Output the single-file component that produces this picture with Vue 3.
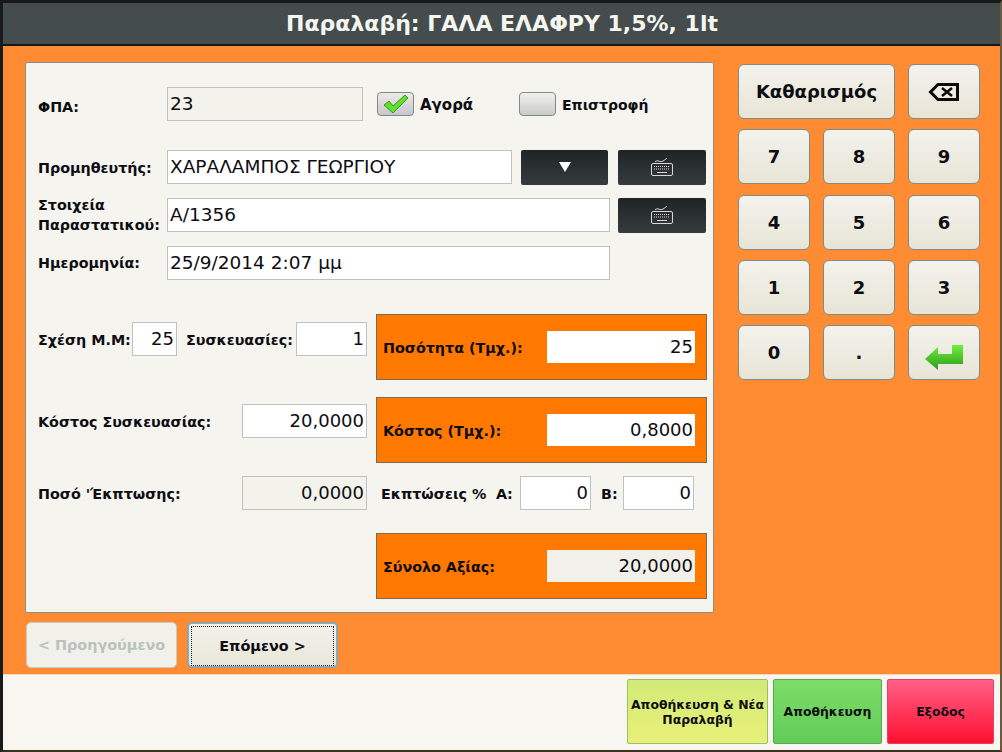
<script setup>
const digits = ["7", "8", "9", "4", "5", "6", "1", "2", "3", "0", "."];
</script>

<template>
  <div class="window">
    <header class="title">Παραλαβή: ΓΑΛΑ ΕΛΑΦΡΥ 1,5%, 1lt</header>

    <main class="body">
      <div class="left">
        <section class="card">
          <div class="row first">
            <label class="lbl vat">ΦΠΑ:</label>
            <div class="field off w196">23</div>
            <div class="check on">
              <svg width="32" height="24" viewBox="0 0 32 24">
                <path d="M4 13 L9 9 L13 14 L25 3 L28 6 L13 21 Z" fill="#5ee02c" stroke="#3c9a1e" stroke-width="1" />
              </svg>
            </div>
            <span class="check-text buy">Αγορά</span>
            <div class="check"></div>
            <span class="check-text">Επιστροφή</span>
          </div>

          <div class="row supplier">
            <label class="lbl">Προμηθευτής:</label>
            <div class="field w345">ΧΑΡΑΛΑΜΠΟΣ ΓΕΩΡΓΙΟΥ</div>
            <button class="dark drop">
              <svg width="14" height="12" viewBox="0 0 14 12"><path d="M1 1 H13 L7 11 Z" fill="#fff" /></svg>
            </button>
            <button class="dark kb">
              <svg width="24" height="20" viewBox="0 0 24 20" fill="none" stroke="#d5d8d4" stroke-width="1">
                <path d="M5 5 C8 2 10 6 13 4 S16 2 17 1" />
                <rect x="1.5" y="6.5" width="21" height="12" rx="1.5" />
                <path d="M4 9.5 H20 M4 12 H20" stroke-dasharray="1 1" />
                <path d="M7 15.5 H17" />
              </svg>
            </button>
          </div>

          <div class="row">
            <label class="lbl two">Στοιχεία Παραστατικού:</label>
            <div class="field w443">Α/1356</div>
            <button class="dark kb">
              <svg width="24" height="20" viewBox="0 0 24 20" fill="none" stroke="#d5d8d4" stroke-width="1">
                <path d="M5 5 C8 2 10 6 13 4 S16 2 17 1" />
                <rect x="1.5" y="6.5" width="21" height="12" rx="1.5" />
                <path d="M4 9.5 H20 M4 12 H20" stroke-dasharray="1 1" />
                <path d="M7 15.5 H17" />
              </svg>
            </button>
          </div>

          <div class="row">
            <label class="lbl date">Ημερομηνία:</label>
            <div class="field w443">25/9/2014 2:07 μμ</div>
          </div>

          <div class="lower">
            <div class="lower-row">
              <div class="side side-a">
                <label class="lbl relation">Σχέση Μ.Μ:</label>
                <div class="field num w45">25</div>
                <label class="lbl packs">Συσκευασίες:</label>
                <div class="field num w71">1</div>
              </div>
              <div class="box">
                <span>Ποσότητα (Τμχ.):</span>
                <div class="field num boxed">25</div>
              </div>
            </div>

            <div class="lower-row gap17">
              <div class="side side-b">
                <label class="lbl">Κόστος Συσκευασίας:</label>
                <div class="field num w125">20,0000</div>
              </div>
              <div class="box">
                <span>Κόστος (Τμχ.):</span>
                <div class="field num boxed">0,8000</div>
              </div>
            </div>

            <div class="lower-row discounts">
              <div class="side">
                <label class="lbl">Ποσό 'Έκπτωσης:</label>
                <div class="field num off w125">0,0000</div>
              </div>
              <div class="disc">
                <label class="lbl d-title">Εκπτώσεις %</label>
                <label class="lbl d-a">Α:</label>
                <div class="field num w71">0</div>
                <label class="lbl d-b">Β:</label>
                <div class="field num w71">0</div>
              </div>
            </div>

            <div class="lower-row">
              <div class="side"></div>
              <div class="box">
                <span>Σύνολο Αξίας:</span>
                <div class="field num boxed off">20,0000</div>
              </div>
            </div>
          </div>
        </section>

        <nav class="nav">
          <button class="nav-btn disabled">&lt; Προηγούμενο</button>
          <button class="nav-btn focused"><span>Επόμενο &gt;</span></button>
        </nav>
      </div>

      <div class="pad">
        <button class="key wide">Καθαρισμός</button>
        <button class="key">
          <svg width="32" height="20" viewBox="0 0 32 20" fill="none" stroke="#0c0c0c" stroke-width="3">
            <path d="M29.5 2.5 H10 L2.5 10 L10 17.5 H29.5 Z" />
            <path d="M14 6 L24 14 M24 6 L14 14" stroke-width="2.6" />
          </svg>
        </button>
        <button v-for="d in digits" :key="d" class="key">{{ d }}</button>
        <button class="key">
          <svg class="enter" width="40" height="28" viewBox="0 0 40 28">
            <defs>
              <linearGradient id="enterFill" x1="0" y1="0" x2="0" y2="1">
                <stop offset="0" stop-color="#6cf03c" />
                <stop offset="1" stop-color="#2f9a1c" />
              </linearGradient>
            </defs>
            <path d="M1 16 L14 4 V11 H28 V2 H39 V21 H14 V27 Z" fill="url(#enterFill)" />
          </svg>
        </button>
      </div>
    </main>

    <footer class="footer">
      <button class="act lime">Αποθήκευση &amp; Νέα Παραλαβή</button>
      <button class="act green">Αποθήκευση</button>
      <button class="act red">Εξοδος</button>
    </footer>
  </div>
</template>

<style scoped>
.window {
  width: 1002px;
  height: 752px;
  box-sizing: border-box;
  display: flex;
  flex-direction: column;
  border-left: 3px solid #17191a;
  border-right: 2px solid #6b5a3c;
  border-top: 3px solid #17191a;
  border-bottom: 2px solid #3a3020;
  font-family: "DejaVu Sans", sans-serif;
  color: #0d0d12;
}
.title {
  height: 43px;
  box-sizing: border-box;
  flex: none;
  background: #444c4d;
  border-bottom: 2px solid #14181a;
  color: #f6f6f0;
  font-size: 22px;
  font-weight: 700;
  line-height: 41px;
  text-align: center;
  padding-left: 1px;
}
.body {
  flex: 1;
  display: flex;
  background: #ff8c32;
  padding: 16px 0 0 22px;
}
.left {
  width: 689px;
  flex: none;
}
.card {
  height: 551px;
  box-sizing: border-box;
  background: #f5f4ef;
  border: 1px solid #8d8d84;
  border-radius: 2px;
  padding: 24px 0 0 12px;
}
.row {
  display: flex;
  align-items: center;
  height: 34px;
  margin-top: 14px;
  padding-right: 7px;
}
.row.first {
  margin-top: 0;
}
.row.supplier {
  margin-top: 29px;
}
.lbl {
  font-size: 14.3px;
  font-weight: 700;
  line-height: 22px;
  white-space: nowrap;
  padding-top: 2px;
}
.row > .lbl {
  width: 129px;
  flex: none;
}
.row > .lbl.vat {
  padding-top: 5px;
}
.row > .lbl.date {
  padding-top: 0;
}
.row > .lbl.two {
  white-space: normal;
  line-height: 20px;
  padding-top: 0;
}
.field {
  height: 34px;
  box-sizing: border-box;
  flex: none;
  background: #fff;
  border: 1px solid #bcc4bd;
  font-size: 18.5px;
  font-weight: 400;
  line-height: 32px;
  padding: 0 2px;
  white-space: nowrap;
  overflow: hidden;
}
.field.off {
  background: #f3f3ec;
}
.field.num {
  text-align: right;
  font-size: 18px;
  line-height: 31px;
}
.w196 { width: 196px; }
.w345 { width: 345px; }
.w443 { width: 443px; }
.w45 { width: 45px; }
.w71 { width: 71px; }
.w125 { width: 125px; }
.check {
  width: 37px;
  height: 24px;
  box-sizing: border-box;
  flex: none;
  margin-left: 14px;
  border: 1px solid #7f8a88;
  border-radius: 4px;
  background: linear-gradient(#f0f0ea, #c9ccc8);
  display: flex;
  align-items: center;
  justify-content: center;
}
.check.on {
  background: linear-gradient(#ecece4, #c8c4cf);
}
.check-text {
  font-size: 14px;
  font-weight: 700;
  margin-left: 6px;
  padding-top: 2px;
}
.check-text.buy {
  width: 87px;
  flex: none;
  font-size: 15px;
}
.check-text.buy + .check {
  margin-left: 12px;
}
.dark {
  height: 35px;
  width: 87px;
  flex: none;
  padding: 0;
  border: 0;
  border-radius: 2px;
  background: linear-gradient(#1f2427, #353c3e);
  display: flex;
  align-items: center;
  justify-content: center;
}
.dark.drop {
  margin-left: 9px;
}
.dark.kb {
  margin-left: auto;
  width: 88px;
}
.lower {
  margin-top: 34px;
}
.lower-row {
  display: flex;
  height: 66px;
}
.lower-row.gap17 {
  margin-top: 17px;
}
.lower-row.discounts {
  height: 70px;
}
.side {
  width: 329px;
  margin-right: 9px;
  flex: none;
  display: flex;
  align-items: center;
  justify-content: space-between;
  height: 34px;
}
.side-a {
  justify-content: flex-start;
  margin-top: 8px;
}
.side-b {
  margin-top: 7px;
}
.discounts .side {
  margin-top: 13px;
}
.relation {
  width: 94px;
  flex: none;
}
.packs {
  width: 110px;
  flex: none;
  margin-left: 9px;
}
.box {
  width: 331px;
  box-sizing: border-box;
  height: 66px;
  background: #ff7800;
  border: 1px solid #7c6a50;
  display: flex;
  align-items: center;
  justify-content: space-between;
  padding: 0 11px 0 6px;
  font-size: 14.3px;
  font-weight: 700;
}
.box > span {
  padding-top: 2px;
}
.field.boxed {
  width: 148px;
  height: 32px;
  border: 0;
  line-height: 31px;
  padding: 0 2px;
}
.field.boxed.off {
  background: #f1f0ea;
}
.disc {
  width: 331px;
  display: flex;
  align-items: center;
  height: 34px;
  margin-top: 13px;
  padding-left: 5px;
  box-sizing: border-box;
}
.d-title {
  width: 115px;
  flex: none;
}
.d-a {
  width: 24px;
  flex: none;
}
.d-b {
  width: 22px;
  flex: none;
  margin-left: 10px;
}
.nav {
  display: flex;
  gap: 10px;
  margin: 9px 0 0 1px;
}
.nav-btn {
  width: 151px;
  height: 46px;
  padding: 2px;
  border: 1px solid #a9b4b0;
  border-radius: 5px;
  font-family: inherit;
  font-size: 14.4px;
  font-weight: 700;
  white-space: nowrap;
  background: linear-gradient(#f3f2ec, #e9e6d8);
  color: #0d0d12;
}
.nav-btn.disabled {
  color: #b9c2bf;
  background: #f1f1ea;
  border-color: #c5ccc4;
}
.nav-btn.focused {
  border: 2px solid #6cb6e4;
  outline: 1px solid #a09c8c;
  outline-offset: -1px;
}
.nav-btn.focused span {
  display: flex;
  align-items: center;
  justify-content: center;
  height: 100%;
  border: 1px dotted #222;
}
.pad {
  display: grid;
  grid-template-columns: repeat(3, 72px);
  grid-auto-rows: 55px;
  column-gap: 13px;
  row-gap: 10.3px;
  margin: 2px 0 0 24px;
  align-content: start;
}
.key {
  padding: 0;
  border: 1px solid #7f8b88;
  border-radius: 6px;
  background: linear-gradient(#f3f2ec, #e8e5d6);
  font-family: inherit;
  font-size: 18px;
  font-weight: 700;
  color: #0d0d12;
  display: flex;
  align-items: center;
  justify-content: center;
}
.key.wide {
  grid-column: span 2;
}
.enter {
  margin-top: 9px;
}
.footer {
  height: 76px;
  flex: none;
  box-sizing: border-box;
  background: #f7f6f0;
  border-top: 1px solid #f3d9b8;
  display: flex;
  justify-content: flex-end;
  gap: 5px;
  padding: 4px 6px 7px;
}
.act {
  height: 65px;
  padding: 0 2px;
  border: 1px solid #9cc060;
  border-radius: 2px;
  font-family: inherit;
  font-size: 12.4px;
  font-weight: 700;
  color: #0d0d12;
  line-height: 15px;
}
.lime {
  width: 141px;
  background: linear-gradient(#d2ea78, #e8f078);
}
.green {
  width: 109px;
  background: linear-gradient(#7edc68, #62cc58);
  border-color: #58a850;
}
.red {
  width: 107px;
  background: linear-gradient(#ff6088, #ff1030);
  border-color: #e84060;
}
</style>

<style>
body {
  background: #fff;
}
</style>
